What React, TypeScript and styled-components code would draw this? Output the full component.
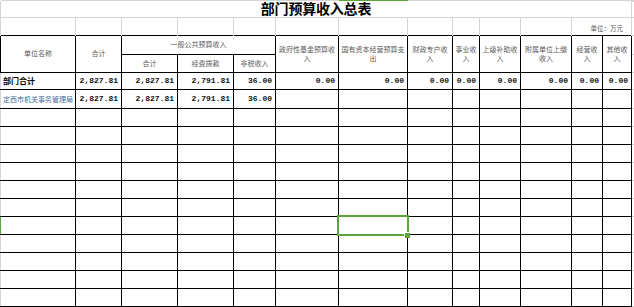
import styled, { createGlobalStyle } from "styled-components";

const GlobalStyle = createGlobalStyle`
  html, body {
    margin: 0;
    padding: 0;
    background: #ffffff;
  }
  body {
    font-family: "Noto Sans CJK SC", "Noto Sans", sans-serif;
    overflow: hidden;
  }
`;

const GRID = "#d4d4d4";
const LINE = "#000000";
const GREEN = "#5ca53a";

const widths = [75, 46, 56, 56, 42, 63, 69, 45, 27, 41, 51, 31, 29, 3];
const SELECTED_COL = 6;
const SELECTED_ROW = 8;

const restHeads = [
  ["政府性基金预算收", "入"],
  ["国有资本经营预算支", "出"],
  ["财政专户收", "入"],
  ["事业收", "入"],
  ["上级补助收", "入"],
  ["附属单位上缴", "收入"],
  ["经营收", "入"],
  ["其他收", "入"],
];

type Row = { name: string; kind: "total" | "unit" | "empty"; values: string[] };

const rows: Row[] = [
  {
    name: "部门合计",
    kind: "total",
    values: ["2,827.81", "2,827.81", "2,791.81", "36.00", "0.00", "0.00", "0.00", "0.00", "0.00", "0.00", "0.00", "0.00"],
  },
  {
    name: "定西市机关事务管理局",
    kind: "unit",
    values: ["2,827.81", "2,827.81", "2,791.81", "36.00", "", "", "", "", "", "", "", ""],
  },
  ...Array.from({ length: 11 }, () => ({ name: "", kind: "empty" as const, values: Array(12).fill("") })),
];

const rowHeights = [17, 19, 18, 18, 18, 18, 18, 18, 18, 18, 18, 18, 18];

export default function App() {
  return (
    <>
      <GlobalStyle />
      <Sheet>
        <Table>
          <colgroup>
            {widths.map((w, i) => (
              <col key={i} style={{ width: w }} />
            ))}
          </colgroup>
          <tbody>
            <MarkRow>
              {widths.map((_, i) => (
                <MarkCell key={i} $active={i === SELECTED_COL} />
              ))}
            </MarkRow>
            <Line $h={16}>
              <TitleCell colSpan={13}>部门预算收入总表</TitleCell>
              <FillCell />
            </Line>
            <Line $h={18}>
              {widths.slice(0, 11).map((_, i) => (
                <UnitCell key={i} />
              ))}
              <UnitCell colSpan={2}>单位：万元</UnitCell>
              <FillCell />
            </Line>
            <Line $h={19}>
              <HeadCell rowSpan={2}>单位名称</HeadCell>
              <HeadCell rowSpan={2}>合计</HeadCell>
              <HeadCell colSpan={3}>一般公共预算收入</HeadCell>
              {restHeads.map(([a, b], i) => (
                <HeadCell key={i} rowSpan={2}>
                  {a}
                  <br />
                  {b}
                </HeadCell>
              ))}
              <FillCell />
            </Line>
            <Line $h={18}>
              <HeadCell>合计</HeadCell>
              <HeadCell>经费拨款</HeadCell>
              <HeadCell>非税收入</HeadCell>
              <FillCell />
            </Line>
            {rows.map((row, r) => (
              <Line key={r} $h={rowHeights[r]}>
                <NameCell $kind={row.kind} $marked={r === SELECTED_ROW}>
                  {row.name}
                </NameCell>
                {row.values.map((v, c) =>
                  r === SELECTED_ROW && c + 1 === SELECTED_COL ? (
                    <ValueCell key={c}>
                      <Selection>
                        <Handle />
                      </Selection>
                    </ValueCell>
                  ) : (
                    <ValueCell key={c}>{v}</ValueCell>
                  )
                )}
                <FillCell />
              </Line>
            ))}
          </tbody>
        </Table>
      </Sheet>
    </>
  );
}

const Sheet = styled.div`
  width: 634px;
  height: 307px;
  overflow: hidden;
  background: #ffffff;
`;

const Table = styled.table`
  border-collapse: collapse;
  table-layout: fixed;
  width: 634px;

  td {
    box-sizing: border-box;
  }
`;

const MarkRow = styled.tr`
  height: 1px;
`;

const MarkCell = styled.td<{ $active: boolean }>`
  height: 1px;
  padding: 0;
  font-size: 0;
  line-height: 0;
  background: ${(p) => (p.$active ? GREEN : GRID)};
`;

/* one sheet row; $h is the pitch from grid line to grid line */
const Line = styled.tr<{ $h: number }>`
  height: ${(p) => p.$h}px;
`;

const TitleCell = styled.td`
  padding: 0;
  border-left: 1px solid ${GRID};
  border-right: 1px solid ${GRID};
  border-bottom: 1px solid ${GRID};
  font-family: "Noto Sans CJK SC", sans-serif;
  font-size: 14px;
  font-weight: 700;
  line-height: 15px;
  letter-spacing: -0.2px;
  text-align: center;
  color: #000000;
  white-space: nowrap;
`;

const UnitCell = styled.td`
  padding: 0 8px 2px 0;
  border-left: 1px solid ${GRID};
  border-right: 1px solid ${GRID};
  border-top: 1px solid ${GRID};
  border-bottom: none;
  font-size: 6.5px;
  line-height: 9px;
  vertical-align: bottom;
  text-align: right;
  color: #555555;
  white-space: nowrap;
`;

const FillCell = styled.td`
  padding: 0;
  border-top: 1px solid ${GRID};
  border-bottom: 1px solid ${GRID};
`;

const HeadCell = styled.td`
  padding: 0 1px;
  border: 1px solid ${LINE};
  font-size: 7px;
  line-height: 9px;
  text-align: center;
  vertical-align: middle;
  color: #5a5a5a;
  white-space: nowrap;
  overflow: hidden;
`;

const NameCell = styled.td<{ $kind: Row["kind"]; $marked: boolean }>`
  padding: 0 0 0 2px;
  border: 1px solid ${LINE};
  border-left: 1px solid ${(p) => (p.$marked ? GREEN : GRID)};
  font-size: ${(p) => (p.$kind === "total" ? "8px" : "7px")};
  font-weight: ${(p) => (p.$kind === "total" ? 700 : 400)};
  color: ${(p) => (p.$kind === "unit" ? "#456a9c" : "#000000")};
  line-height: 10px;
  white-space: nowrap;
  overflow: hidden;
`;

const ValueCell = styled.td`
  position: relative;
  padding: 0 3px 0 0;
  border: 1px solid ${LINE};
  font-family: "Liberation Mono", "DejaVu Sans Mono", monospace;
  font-size: 8px;
  font-weight: 700;
  line-height: 10px;
  text-align: right;
  color: #111111;
  white-space: nowrap;
`;

const Selection = styled.div`
  position: absolute;
  top: -2px;
  left: -2px;
  right: -2px;
  bottom: -2px;
  border: 2px solid ${GREEN};
`;

const Handle = styled.div`
  position: absolute;
  right: -3px;
  bottom: -4px;
  width: 5px;
  height: 5px;
  background: ${GREEN};
  border: 1px solid #ffffff;
  border-right: none;
  border-bottom: none;
`;
